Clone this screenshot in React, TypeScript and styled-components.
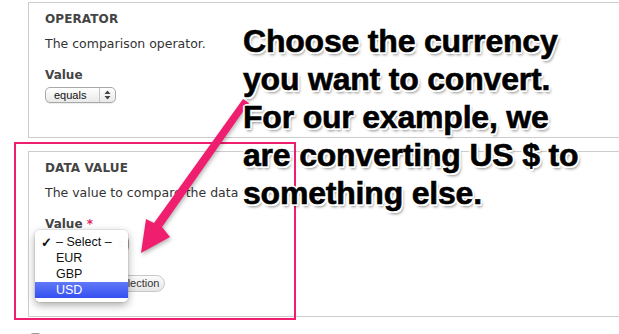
import React from "react";
import styled, { createGlobalStyle } from "styled-components";

const GlobalStyle = createGlobalStyle`
  html, body {
    margin: 0;
    padding: 0;
    background: #ffffff;
    overflow: hidden;
  }
`;

const Color = {
  Border: "#cccccc",
  Text: "#333333",
  Heading: "#444444",
  Pink: "#f01e6e",
  Required: "#e0245e",
};

const Page = styled.div`
  position: relative;
  width: 619px;
  height: 334px;
  overflow: hidden;
  padding-left: 28px;
  box-sizing: border-box;
  font-family: "DejaVu Sans", "Liberation Sans", sans-serif;
  color: ${Color.Text};
`;

const Fieldset = styled.section<{ $top: number; $bottom: number }>`
  width: 640px;
  margin-top: ${(p) => p.$top}px;
  padding: 9px 16px ${(p) => p.$bottom}px 16px;
  border: 1px solid ${Color.Border};
  box-sizing: border-box;
  display: flex;
  flex-direction: column;
  align-items: flex-start;
`;

const Legend = styled.h3`
  margin: 0;
  font-size: 12px;
  line-height: 14px;
  font-weight: bold;
  letter-spacing: 0.1px;
  color: ${Color.Heading};
  text-transform: uppercase;
`;

const Description = styled.p`
  margin: 10px 0 0 0;
  font-size: 12.5px;
  line-height: 15px;
  color: ${Color.Text};
  white-space: nowrap;
`;

const Label = styled.label`
  margin-top: 17px;
  font-size: 12px;
  line-height: 14px;
  font-weight: bold;
  color: ${Color.Heading};

  > span {
    color: ${Color.Required};
  }
`;

const SelectWrap = styled.div<{ $bottom: number }>`
  position: relative;
  margin-top: 5px;
  margin-bottom: ${(p) => p.$bottom}px;
`;

const NativeSelect = styled.div<{ $width: number }>`
  width: ${(p) => p.$width}px;
  height: 16px;
  box-sizing: border-box;
  display: flex;
  align-items: stretch;
  border: 1px solid #a9a9a9;
  border-radius: 5px;
  background: linear-gradient(#ffffff, #e9e9e9);
  box-shadow: 0 1px 1px rgba(0, 0, 0, 0.08);
  font-family: "Liberation Sans", Arial, sans-serif;
  font-size: 11px;
  color: #111;

  > .value {
    flex: 1;
    padding-left: 8px;
    line-height: 14px;
  }

  > .stepper {
    width: 15px;
    border-left: 1px solid #c4c4c4;
    display: flex;
    align-items: center;
    justify-content: center;
  }
`;

const Button = styled.button`
  margin-left: 17px;
  height: 17px;
  padding: 0 5px 0 9px;
  border: 1px solid #c8c8c8;
  border-radius: 9px;
  background: linear-gradient(#fbfbfb, #e6e6e6);
  font-family: "Liberation Sans", Arial, sans-serif;
  font-size: 11px;
  line-height: 15px;
  color: #333;
`;

const Popup = styled.ul`
  position: absolute;
  left: -10px;
  top: -6px;
  width: 93px;
  margin: 0;
  padding: 4px 0 4px 0;
  list-style: none;
  background: rgba(255, 255, 255, 0.98);
  border-radius: 5px;
  box-shadow: 0 3px 9px rgba(0, 0, 0, 0.35), 0 0 0 1px rgba(0, 0, 0, 0.06);
  font-family: "Liberation Sans", Arial, sans-serif;
  font-size: 12.5px;
  color: #111;
  z-index: 2;
`;

const Option = styled.li<{ $active?: boolean }>`
  position: relative;
  height: 16px;
  line-height: 17px;
  padding-left: 21px;
  color: ${(p) => (p.$active ? "#ffffff" : "#111")};
  background: ${(p) =>
    p.$active ? "linear-gradient(#6079f7, #3450f0)" : "transparent"};

  > .check {
    position: absolute;
    left: 6px;
    top: 0;
    font-size: 13px;
    font-weight: bold;
  }
`;

const Checkbox = styled.div`
  margin: 16px 0 0 2px;
  width: 9px;
  height: 9px;
  border: 1px solid #999;
  border-radius: 3px;
  background: linear-gradient(#fff, #ddd);
`;

const Highlight = styled.div`
  position: absolute;
  left: 14px;
  top: 142px;
  width: 282px;
  height: 178px;
  box-sizing: border-box;
  border: 2px solid ${Color.Pink};
  pointer-events: none;
`;

const ArrowLayer = styled.svg`
  position: absolute;
  left: 0;
  top: 0;
  width: 619px;
  height: 334px;
  pointer-events: none;
  filter: drop-shadow(1px 2px 2px rgba(0, 0, 0, 0.3));
`;

const Callout = styled.div`
  position: absolute;
  left: 243px;
  top: 22px;
  font-family: "Liberation Sans", Arial, Helvetica, sans-serif;
  font-weight: bold;
  font-size: 32px;
  line-height: 38px;
  letter-spacing: -0.2px;
  color: #000;
  white-space: nowrap;
  -webkit-text-stroke: 0.6px #000;
  text-shadow:
    2px 0 0 #fff, -2px 0 0 #fff, 0 2px 0 #fff, 0 -2px 0 #fff,
    1.5px 1.5px 0 #fff, -1.5px 1.5px 0 #fff, 1.5px -1.5px 0 #fff,
    -1.5px -1.5px 0 #fff, 2px 3px 3px rgba(0, 0, 0, 0.45);
`;

const Stepper = () => (
  <svg width="7" height="10" viewBox="0 0 7 10">
    <path d="M3.5 0.5 L6.5 4 H0.5 Z" fill="#444" />
    <path d="M3.5 9.5 L6.5 6 H0.5 Z" fill="#444" />
  </svg>
);

const currencies = ["EUR", "GBP", "USD"];

export default function App() {
  return (
    <>
      <GlobalStyle />
      <Page>
        <Fieldset $top={2} $bottom={34}>
          <Legend>Operator</Legend>
          <Description>The comparison operator.</Description>
          <Label>Value</Label>
          <SelectWrap $bottom={0}>
            <NativeSelect $width={71}>
              <span className="value">equals</span>
              <span className="stepper">
                <Stepper />
              </span>
            </NativeSelect>
          </SelectWrap>
        </Fieldset>

        <Fieldset $top={13} $bottom={24}>
          <Legend>Data value</Legend>
          <Description>The value to compare the data v</Description>
          <Label>
            Value <span>*</span>
          </Label>
          <SelectWrap $bottom={23}>
            <NativeSelect $width={84}>
              <span className="value">- Select -</span>
              <span className="stepper">
                <Stepper />
              </span>
            </NativeSelect>
            <Popup>
              <Option>
                <span className="check">✓</span>– Select –
              </Option>
              {currencies.map((c) => (
                <Option key={c} $active={c === "USD"}>
                  {c}
                </Option>
              ))}
            </Popup>
          </SelectWrap>
          <Button>Remove selection</Button>
        </Fieldset>
        <Checkbox />

        <Highlight />
        <ArrowLayer viewBox="0 0 619 334">
          <polygon
            fill={Color.Pink}
            points="243,99 249,103 162,227 170,237 141,253 146,219 154,223"
          />
        </ArrowLayer>
        <Callout>
          Choose the currency
          <br />
          you want to convert.
          <br />
          For our example, we
          <br />
          are converting US $ to
          <br />
          something else.
        </Callout>
      </Page>
    </>
  );
}
